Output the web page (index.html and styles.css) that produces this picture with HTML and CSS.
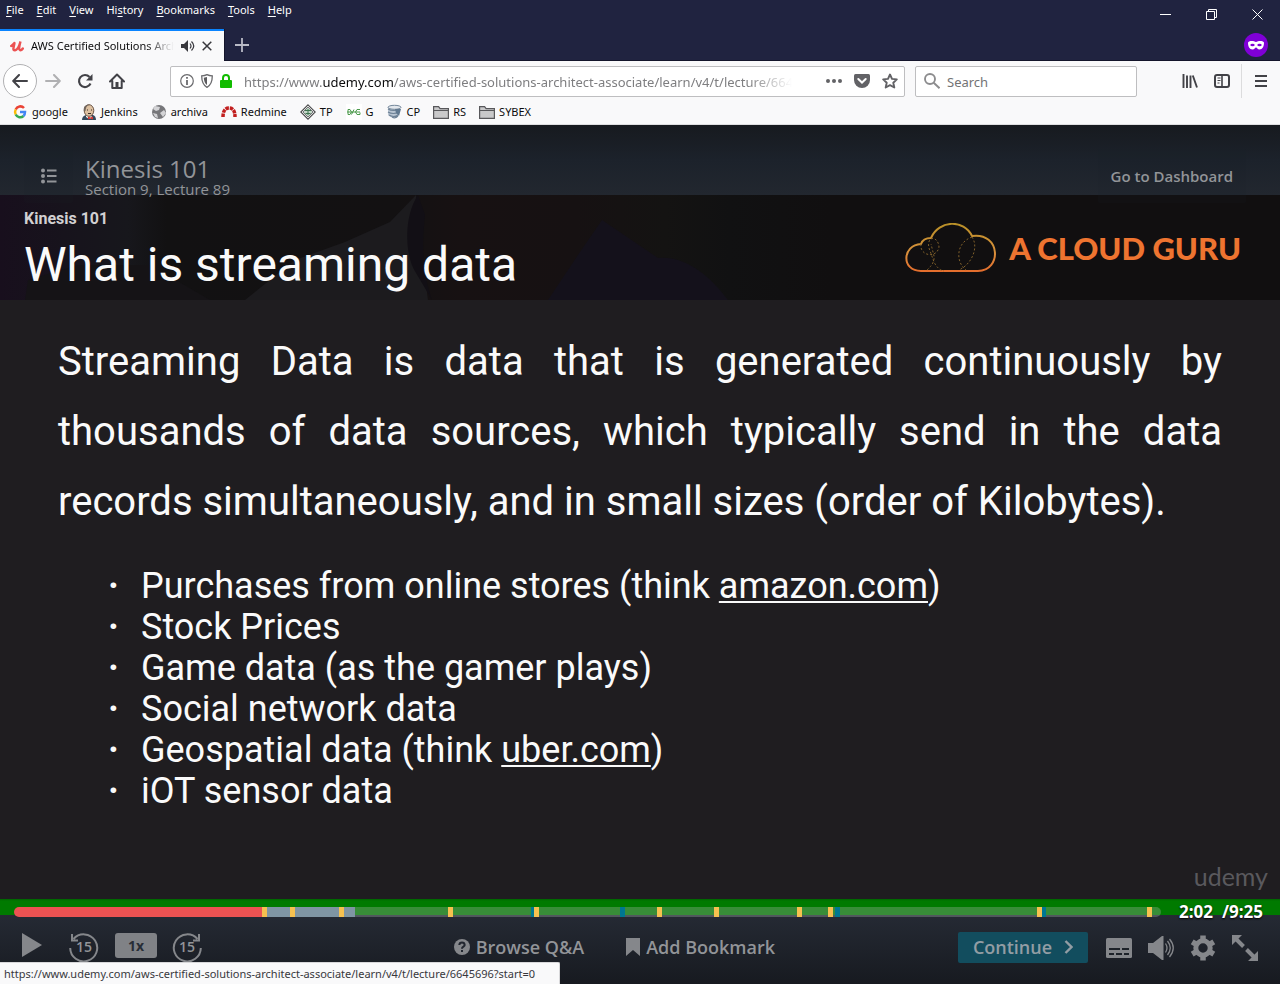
FILE: index.html
```
<!DOCTYPE html>
<html lang="en">
<head>
<meta charset="utf-8">
<title>AWS Certified Solutions Architect</title>
<link rel="stylesheet" href="styles.css">
</head>
<body>
<header class="titlebar">
  <div class="menu-row">
    <nav class="menus">
      <button><u>F</u>ile</button><button><u>E</u>dit</button><button><u>V</u>iew</button><button>Hi<u>s</u>tory</button><button><u>B</u>ookmarks</button><button><u>T</u>ools</button><button><u>H</u>elp</button>
    </nav>
    <div class="window-buttons">
      <button aria-label="Minimize"><svg width="11" height="11" viewBox="0 0 11 11"><path d="M0 5.5h11" stroke="#fff"/></svg></button>
      <button aria-label="Restore"><svg width="11" height="11" viewBox="0 0 11 11" fill="none" stroke="#fff"><path d="M.5 2.5h8v8h-8zM2.500 2.500v-2h8v8h-2"/></svg></button>
      <button aria-label="Close window"><svg width="11" height="11" viewBox="0 0 11 11"><path d="M.5.5l10 10M10.500.5l-10 10" stroke="#fff"/></svg></button>
    </div>
  </div>
  <div class="tab-row">
    <div class="tab">
      <svg width="14" height="12" viewBox="0 0 14 12" fill="none" stroke="#ec5252" stroke-width="2.400" stroke-linecap="round"><path d="M1.200 6C4 4.500 5 1 4.200 4.500S2.500 10.500 5 10.300C8 10 9.500 5 10.500 1.500 9 7 8.500 10 10.200 10.300 11.500 10.300 12.300 9.300 12.800 8.500"/></svg>
      <span class="tab-title">AWS Certified Solutions Architect</span>
      <button aria-label="Mute tab"><svg width="14" height="12" viewBox="0 0 14 12"><path d="M0 4h3l4-4v12L3 8H0z" fill="#38383d"/><path d="M9 3.500q2 2.500 0 5M10.500 1.500q4.500 4.500 0 9" fill="none" stroke="#38383d" stroke-width="1.200"/></svg></button>
      <button aria-label="Close tab"><svg width="10" height="10" viewBox="0 0 10 10"><path d="M.7.7l8.600 8.600M9.300.7L.7 9.300" stroke="#38383d" stroke-width="1.500"/></svg></button>
    </div>
    <button class="new-tab" aria-label="New tab"><svg width="14" height="14" viewBox="0 0 14 14"><path d="M7 0v14M0 7h14" stroke="#b9bac6" stroke-width="1.800"/></svg></button>
    <svg class="private" width="24" height="24" viewBox="0 0 24 24"><circle cx="12" cy="12" r="12" fill="#8000d7"/><path d="M4 9.500C6 7 10 8 12 9c2-1 6-2 8 .5 0 4-1.500 7-4.500 7-2 0-2.500-2-3.500-2s-1.500 2-3.500 2C5.500 16.500 4 13.500 4 9.500z" fill="#fff"/><ellipse cx="8.500" cy="12" rx="2.200" ry="1.300" fill="#8000d7"/><ellipse cx="15.500" cy="12" rx="2.200" ry="1.300" fill="#8000d7"/></svg>
  </div>
</header>

<div class="toolbar">
  <button class="back" aria-label="Back"><svg width="16" height="14" viewBox="0 0 16 14" fill="none" stroke="#424247" stroke-width="2" stroke-linecap="round" stroke-linejoin="round"><path d="M15 7H1.500M7 1L1.200 7 7 13"/></svg></button>
  <div class="nav-buttons">
    <button aria-label="Forward"><svg width="16" height="14" viewBox="0 0 16 14" fill="none" stroke="#b0b0b2" stroke-width="2" stroke-linecap="round" stroke-linejoin="round"><path d="M1 7h13.500M9 1l5.800 6L9 13"/></svg></button>
    <button aria-label="Reload"><svg width="16" height="16" viewBox="0 0 16 16" fill="none" stroke="#424247" stroke-width="2.200"><path d="M13.500 10.500A6 6 0 1 1 12.500 4"/><path d="M15.500 1v6.500H9z" fill="#424247" stroke="none"/></svg></button>
    <button aria-label="Home"><svg width="16" height="16" viewBox="0 0 16 16"><path d="M1 8.500L8 1.500l7 7M3.300 8v7h9.400V8" fill="none" stroke="#424247" stroke-width="2" stroke-linecap="round" stroke-linejoin="round"/><path d="M6.500 9h3v6h-3z" fill="#424247"/></svg></button>
  </div>
  <div class="address">
    <svg width="14" height="14" viewBox="0 0 14 14"><circle cx="7" cy="7" r="6.300" fill="none" stroke="#6b6b6e" stroke-width="1.200"/><path d="M7 6v5M7 3v1.800" stroke="#6b6b6e" stroke-width="1.800"/></svg>
    <svg width="12" height="14" viewBox="0 0 12 14"><path d="M6 .7c2 1 3.500 1.100 5.300 1.100C11.300 8 9.500 11.500 6 13.300 2.500 11.500.7 8 .7 1.800 2.500 1.800 4 1.700 6 .7z" fill="none" stroke="#6b6b6e" stroke-width="1.300"/><path d="M6 3v8C3.800 9.500 3 7 2.800 3.700z" fill="#5b5b5e"/></svg>
    <svg width="12" height="14" viewBox="0 0 12 14"><path d="M3 7V4a3 3 0 0 1 6 0v3" fill="none" stroke="#12bc00" stroke-width="2"/><rect y="6" width="12" height="8" rx="1" fill="#12bc00"/></svg>
    <span class="url">https://www.<b>udemy.com</b>/aws-certified-solutions-architect-associate/learn/v4/t/lecture/6645696</span>
    <button aria-label="Page actions"><svg width="16" height="4" viewBox="0 0 16 4" fill="#626266"><circle cx="2" cy="2" r="2"/><circle cx="8" cy="2" r="2"/><circle cx="14" cy="2" r="2"/></svg></button>
    <button aria-label="Save to Pocket"><svg width="16" height="14" viewBox="0 0 16 14"><path d="M1.500 0h13Q16 0 16 1.500V6a8 8 0 0 1-16 0V1.500Q0 0 1.500 0z" fill="#626266"/><path d="M4.300 5L8 8.500 11.700 5" fill="none" stroke="#fff" stroke-width="2" stroke-linecap="round"/></svg></button>
    <button aria-label="Bookmark page"><svg width="16" height="16" viewBox="0 0 16 16"><path d="M8 1.500l2 4.400 4.800.5-3.500 3.300 1 4.800L8 12.200l-4.300 2.300 1-4.800L1.200 6.400 6 5.900z" fill="none" stroke="#626266" stroke-width="1.900" stroke-linejoin="round"/></svg></button>
  </div>
  <label class="search"><svg width="16" height="16" viewBox="0 0 16 16" fill="none" stroke="#8c8c8e" stroke-width="1.900"><circle cx="6" cy="6" r="5"/><path d="M9.700 9.700l5.800 5.500"/></svg><input type="text" placeholder="Search" aria-label="Search"></label>
  <div class="tools">
    <button aria-label="Library"><svg width="16" height="14" viewBox="0 0 16 14" stroke="#424247" stroke-width="1.900"><path d="M1.500 0v14M5 1.500V14M8.500 1.500V14M10.800 1.500L15 13.500"/></svg></button>
    <button aria-label="Sidebars"><svg width="16" height="14" viewBox="0 0 16 14" fill="none" stroke="#424247"><rect x="1" y="1" width="14" height="12" rx="2" stroke-width="2"/><path d="M8 1v12" stroke-width="1.600"/><path d="M3.500 4h3M3.500 6.500h3M3.500 9h2"/></svg></button>
  </div>
  <button class="app-menu" aria-label="Open menu"><svg width="12" height="12" viewBox="0 0 12 12" stroke="#424247" stroke-width="2"><path d="M0 1h12M0 6h12M0 11h12"/></svg></button>
</div>

<nav class="bookmarks">
  <a href="#"><svg width="16" height="16" viewBox="0 0 16 16" fill="none" stroke-width="2.500"><path d="M12 4A5 5 0 0 0 3.700 5.500" stroke="#ea4335"/><path d="M3.700 5.500a5.200 5.200 0 0 0 0 5" stroke="#fbbc05"/><path d="M3.700 10.500A5 5 0 0 0 11.500 12" stroke="#34a853"/><path d="M8 8h5c0 2-.5 3-1.500 4" stroke="#4285f4"/></svg>google</a>
  <a href="#"><svg width="16" height="16" viewBox="0 0 16 16"><path d="M1 16q0-4 4-5l7 0q3 1 3 5z" fill="#34495c"/><path d="M5 10h5l1 4-3 1-3-2z" fill="#f2eee8"/><ellipse cx="8" cy="6.500" rx="4.800" ry="5.800" fill="#dcc0a0" stroke="#67503f"/><path d="M3 7C2 2 5 0 9 1 6 1 5 3 4.500 7z" fill="#71655c"/><path d="M6 6h1M10 6h1M7 9.500h3" stroke="#3a2c27"/><path d="M7 12.500l2.500 1 2.500-1v3l-2.500-1-2.500 1z" fill="#d33833"/></svg>Jenkins</a>
  <a href="#"><svg width="16" height="16" viewBox="0 0 16 16"><circle cx="8" cy="8" r="7" fill="#77777a"/><path d="M4 2l5 1-1 3-3 1-3-2zM9 9l4-3 2 3-3 4zM2 9l4 1 1 4-3-1z" fill="#d4d4d6"/></svg>archiva</a>
  <a href="#"><svg width="16" height="16" viewBox="0 0 16 16" fill="none" stroke="#c21f1f" stroke-width="3.500" stroke-dasharray="3.500 .8"><path d="M2 13C2 7 4 4 8 4s6 3 6 9"/></svg>Redmine</a>
  <a href="#"><svg width="16" height="16" viewBox="0 0 16 16" fill="none"><path d="M8 .8L15.200 8 8 15.200.8 8z" fill="#fff" stroke="#48484a" stroke-width="1.100"/><path d="M8 3L13 8l-5 5-5-5z" fill="#c5d8c9" stroke="#59595b" stroke-width=".8"/><path d="M5 6.500h6M8 5v6M5.500 9.500h5" stroke="#3f7450"/></svg>TP</a>
  <a href="#"><svg width="16" height="16" viewBox="0 0 16 16" fill="none" stroke="#4c9a4c"><path fill="#fff" stroke="none" d="M0 0h16v16H0z"/><path d="M1 8h13M2 5.500h2q3 2.500 0 5H2zM8 5.500L5.500 10.500M14 5.500h-3q-3 2.500 0 5h3v-2"/></svg>G</a>
  <a href="#"><svg width="16" height="16" viewBox="0 0 16 16"><path d="M1 3v8q5 5 10 0V3z" fill="#b9c5d2"/><path d="M1 5q5 3 12 0M1 8q5 3 11 0M2 11q5 3 9 0M5 13q3 2 6-1" fill="none" stroke="#6e8296" stroke-width="1.200"/><ellipse cx="7.500" cy="3.300" rx="6.500" ry="2" fill="#e2e7ec" stroke="#75889b"/><path d="M8 5h6l-2 7-3-3z" fill="#617990"/></svg>CP</a>
  <a href="#"><svg width="16" height="16" viewBox="0 0 16 16"><path d="M.6 2.600h5l1.500 2h8.300v9.800H.6z" fill="#c9c9ca" stroke="#58585b" stroke-width="1.200"/><path d="M1 6.500h14" stroke="#58585b"/></svg>RS</a>
  <a href="#"><svg width="16" height="16" viewBox="0 0 16 16"><path d="M.6 2.600h5l1.500 2h8.300v9.800H.6z" fill="#c9c9ca" stroke="#58585b" stroke-width="1.200"/><path d="M1 6.500h14" stroke="#58585b"/></svg>SYBEX</a>
</nav>

<main class="player">
  <div class="lecture-bar">
    <button class="outline" aria-label="Course content"><svg width="16" height="16" viewBox="0 0 16 16"><g fill="#929498"><circle cx="2" cy="2.500" r="2"/><circle cx="2" cy="8" r="2"/><circle cx="2" cy="13.500" r="2"/></g><path d="M6 2.500h9.500M6 8h9.500M6 13.500h9.500" stroke="#929498" stroke-width="2"/></svg></button>
    <div class="lecture">
      <h1>Kinesis 101</h1>
      <p>Section 9, Lecture 89</p>
    </div>
    <a class="dashboard" href="#">Go to Dashboard</a>
  </div>

  <section class="slide">
    <div class="slide-head">
      <svg class="backdrop" viewBox="0 0 1280 105" preserveAspectRatio="none"><defs><linearGradient id="bg"><stop offset="0" stop-color="#180f1d"/><stop offset=".05" stop-color="#17131c"/><stop offset=".1" stop-color="#17171c"/><stop offset=".13" stop-color="#121112"/><stop offset=".31" stop-color="#131112"/><stop offset=".36" stop-color="#171112"/><stop offset=".45" stop-color="#161112"/><stop offset=".52" stop-color="#141312"/><stop offset=".57" stop-color="#111112"/><stop offset=".65" stop-color="#110f10"/></linearGradient></defs><path d="M0 0h1280v105H0z" fill="url(#bg)"/><path d="M28 85l50-15 72 0 60 35H25z" fill="#151316"/><path d="M245 105l50-40 50-18 45-20 26-27 2 30 10 75z" fill="#1c1b1e"/><path d="M418 0c-14 20-14 60-2 78l16 27c-12-35-9-65-7-85z" fill="#120f15"/><path d="M602 25l-24 35-30 45h180c-15-20-40-45-70-42z" fill="#14111b"/></svg>
      <div class="slide-titles">
        <p>Kinesis 101</p>
        <h2>What is streaming data</h2>
      </div>
      <div class="brand">
        <svg width="92" height="50" viewBox="0 0 92 50" fill="none"><defs><linearGradient id="cloud" x2="0" y2="1"><stop stop-color="#b99028"/><stop offset=".6" stop-color="#d9903c"/><stop offset="1" stop-color="#e46e2d"/></linearGradient></defs><path d="M16 48C-4 48-3 22 16 21q2-6 10-6C34-3 59-4 67 13c29-4 30 35 6 35z" stroke="url(#cloud)" stroke-width="2"/><path d="M16 21c-2 12 16 15 18 3-1-12-13-11-10 1l5 14q4 8 10 9M22 47q8-7 7-14l-3-12M67 14c-17 6-16 26-6 33M67 14c7 10 0 27-13 33" stroke="#80602a" stroke-dasharray="2 2"/></svg>
        <span>A CLOUD GURU</span>
      </div>
    </div>
    <div class="slide-body">
      <p>Streaming Data is data that is generated continuously by thousands of data sources, which typically send in the data records simultaneously, and in small sizes (order of Kilobytes).</p>
      <ul>
        <li>Purchases from online stores (think <a href="#">amazon.com</a>)</li>
        <li>Stock Prices</li>
        <li>Game data (as the gamer plays)</li>
        <li>Social network data</li>
        <li>Geospatial data (think <a href="#">uber.com</a>)</li>
        <li>iOT sensor data</li>
      </ul>
    </div>
    <div class="watermark">udemy</div>
  </section>

  <footer class="controls">
    <div class="timeline">
      <div class="track">
        <input type="range" min="0" max="565" value="122" aria-label="Seek">
        <i class="mark note" style="left:45.100%"></i><i class="mark note" style="left:52.800%"></i><i class="mark note" style="left:71.600%"></i><i class="mark note" style="left:89.500%"></i>
        <i class="mark" style="left:21.600%"></i><i class="mark" style="left:24.100%"></i><i class="mark" style="left:28.300%"></i><i class="mark" style="left:37.800%"></i><i class="mark" style="left:45.300%"></i><i class="mark" style="left:56.100%"></i><i class="mark" style="left:61%"></i><i class="mark" style="left:68.300%"></i><i class="mark" style="left:71%"></i><i class="mark" style="left:89.200%"></i><i class="mark" style="left:98.800%"></i>
      </div>
      <div class="time"><span>2:02</span><span>/9:25</span></div>
    </div>
    <div class="buttons">
      <div class="group playback">
        <button aria-label="Play"><svg width="22" height="24" viewBox="0 0 22 24"><path d="M1 0l20 12L1 24z" fill="#85878b"/></svg></button>
        <button class="skip" aria-label="Back 15 seconds"><svg width="30" height="30" viewBox="0 0 30 30" fill="none" stroke="#85878b" stroke-width="2"><path d="M4.500 6A13.500 13.500 0 1 1 1.200 15M3 1v6.500h6"/></svg><span>15</span></button>
        <button class="rate">1x</button>
        <button class="skip" aria-label="Forward 15 seconds"><svg width="30" height="30" viewBox="0 0 30 30" fill="none" stroke="#85878b" stroke-width="2"><path d="M25.500 6A13.500 13.500 0 1 0 28.800 15M27 1v6.500h-6"/></svg><span>15</span></button>
      </div>
      <div class="group actions">
        <button><svg width="16" height="16" viewBox="0 0 16 16"><circle cx="8" cy="8" r="8" fill="#85878b"/><path d="M5.300 6Q5.500 3.500 8 3.500T10.700 6C10.700 7.800 8 7.500 8 9.700M8 11v2" fill="none" stroke="#21262f" stroke-width="2"/></svg>Browse Q&amp;A</button>
        <button><svg width="14" height="18" viewBox="0 0 14 18"><path d="M0 0h14v18l-7-6-7 6z" fill="#85878b"/></svg>Add Bookmark</button>
      </div>
      <div class="group options">
        <button class="continue">Continue <svg width="9" height="14" viewBox="0 0 9 14"><path d="M1.500 1l6 6-6 6" fill="none" stroke="#929da4" stroke-width="2.400"/></svg></button>
        <button aria-label="Captions"><svg width="26" height="20" viewBox="0 0 26 20"><rect width="26" height="20" rx="1.500" fill="#85878b"/><path d="M3 11h11M16 11h7M3 16h5M10 16h6M18 16h5" stroke="#1d2229" stroke-width="2"/></svg></button>
        <button aria-label="Volume"><svg width="26" height="24" viewBox="0 0 26 24"><path d="M0 7h5l9-7h1.500v24H14l-9-7H0z" fill="#85878b"/><path d="M17.500 7.500q3 4.500 0 9M19.500 5q5.500 7 0 14M21.500 3q7.500 9 0 18" fill="none" stroke="#85878b" stroke-width="1.300"/></svg></button>
        <button aria-label="Settings"><svg width="26" height="26" viewBox="0 0 26 26"><circle cx="13" cy="13" r="7.200" fill="none" stroke="#85878b" stroke-width="5"/><path d="M13 .5v6M13 19.500v6M2.200 6.800l5 3M18.800 16.200l5 3M2.200 19.200l5-3M18.800 9.800l5-3" stroke="#85878b" stroke-width="5.500"/></svg></button>
        <button class="expand" aria-label="Full screen"><svg width="26" height="26" viewBox="0 0 26 26"><path d="M0 0h10L0 10zM26 26H16l10-10z" fill="#85878b"/><path d="M3 3l8.500 8.500M14.500 14.500L23 23" stroke="#85878b" stroke-width="4"/></svg></button>
      </div>
    </div>
  </footer>
</main>
<div class="status">https://www.udemy.com/aws-certified-solutions-architect-associate/learn/v4/t/lecture/6645696?start=0</div>
</body>
</html>
```
FILE: styles.css
```
* { box-sizing: border-box; }
body { margin: 0; min-height: 100vh; display: flex; flex-direction: column; background: #1f1d20; color: #0c0c0d; font: 11px/16px "Noto Sans", "Open Sans", sans-serif; }
button { padding: 0; border: 0; background: none; color: inherit; font: inherit; display: flex; align-items: center; justify-content: center; }
svg { display: block; flex: none; }
h1, h2, p, ul { margin: 0; padding: 0; font-weight: 400; }
a { color: inherit; text-decoration: none; }

.titlebar { background: #202340; color: #fff; }
.menu-row { display: flex; justify-content: space-between; height: 29px; }
.menus { display: flex; align-items: flex-start; gap: 13px; padding: 2px 6px; }
.menus button { display: block; }
.menus u { text-underline-offset: 2px; }
.window-buttons { display: flex; }
.window-buttons button { width: 46px; height: 28px; }
.tab-row { display: flex; height: 32px; border-bottom: 1px solid #14152b; }
.tab { display: flex; align-items: center; gap: 7px; width: 224px; height: 32px; padding: 0 12px 0 10px; border-top: 2px solid #0a84ff; background: #f9f9fa; color: #0c0c0d; }
.tab-title { flex: 1; overflow: hidden; white-space: nowrap; -webkit-mask-image: linear-gradient(to right, #000 80%, transparent); mask-image: linear-gradient(to right, #000 80%, transparent); }
.new-tab { width: 34px; border-left: 1px solid #14152b; }
.private { margin: 4px 12px 0 auto; }

.toolbar { display: flex; align-items: center; height: 40px; padding-left: 3px; background: #f9f9fa; }
.back { width: 34px; height: 34px; border: 1px solid #b1b1b3; border-radius: 50%; background: #fff; }
.nav-buttons { display: flex; gap: 16px; padding-left: 8px; }
.address, .search { display: flex; align-items: center; height: 31px; border: 1px solid #bebec0; border-radius: 2px; background: #fff; }
.address { flex: 1; min-width: 0; gap: 7px; margin-left: 45px; padding: 0 6px 0 9px; }
.url { flex: 1; min-width: 0; margin: 2px 22px 0 5px; overflow: hidden; white-space: nowrap; color: #7e7e80; font-size: 13px; -webkit-mask-image: linear-gradient(to right, #000 92%, transparent); mask-image: linear-gradient(to right, #000 92%, transparent); }
.url b { font-weight: 400; color: #0c0c0d; }
.address button { margin-left: 5px; }
.search { width: 222px; margin-left: 10px; gap: 7px; padding: 0 8px; }
.search input { flex: 1; min-width: 0; border: 0; outline: 0; padding: 2px 0 0; background: none; font: 13px/16px "Noto Sans", "Open Sans", sans-serif; }
.search input::placeholder { color: #737375; opacity: 1; }
.tools { display: flex; gap: 16px; margin-left: 45px; padding-right: 11px; }
.app-menu { width: 39px; height: 34px; border-left: 1px solid #dcdcdd; }

.bookmarks { display: flex; gap: 13px; height: 24px; padding: 3px 12px 0; background: #f9f9fa; border-bottom: 1px solid #dedee0; }
.bookmarks a { display: flex; gap: 4px; height: 16px; white-space: nowrap; }

.player { flex: 1; display: flex; flex-direction: column; font-family: "Open Sans", sans-serif; }
.lecture-bar { position: relative; z-index: 1; display: flex; align-items: flex-start; height: 70px; padding: 24px 34px 0 24px; background: linear-gradient(#171a1f, #1c222b 50%, #22272f); color: #929498; }
.outline { width: 49px; height: 54px; border-radius: 2px; background: rgba(30, 34, 42, .15); }
.lecture { flex: 1; margin: 7px 0 0 12px; }
.lecture h1 { font-size: 24px; line-height: 26px; }
.lecture p { font-size: 15px; line-height: 14px; }
.dashboard { padding: 17px 13px; border-radius: 2px; background: rgba(30, 34, 42, .15); font-size: 15px; line-height: 20px; font-weight: 600; }

.slide { flex: 1; display: flex; flex-direction: column; color: #fafafa; font-family: Roboto, sans-serif; }
.slide-head { position: relative; display: flex; justify-content: space-between; height: 105px; padding: 14px 39px 0 24px; background: #110f10; }
.backdrop { position: absolute; inset: 0; width: 100%; height: 100%; }
.slide-titles, .brand { position: relative; }
.slide-titles p { color: #d2d0d2; font-size: 16px; line-height: 20px; font-weight: 700; }
.slide-titles h2 { font-size: 48px; line-height: 72px; }
.brand { display: flex; align-items: center; gap: 12px; height: 78px; color: #ee7430; font: 900 31px/40px Lato, sans-serif; }
.slide-body { padding: 27px 58px 0; }
.slide-body p { font-size: 40px; line-height: 70px; text-align: justify; }
.slide-body ul { margin-top: 29px; padding-left: 50px; list-style: none; font-size: 36px; line-height: 41px; }
.slide-body li { display: block; }
.slide-body li::before { content: "·"; display: inline-block; width: 33px; font-weight: 700; }
.slide-body a { text-decoration: underline; text-decoration-thickness: 2px; text-underline-offset: 3px; }
.watermark { margin: auto 12px 7px auto; color: #5a595d; font: 25px/32px Lato, sans-serif; }

.controls { height: 85px; background: linear-gradient(#006500 0, #007a00 2px, #007a00 16px, transparent 16px), linear-gradient(#252a34 16px, #171a20); color: #929498; }
.timeline { display: flex; align-items: center; height: 26px; padding: 0 17px 0 14px; }
.track { position: relative; flex: 1; height: 10px; }
.track input { display: block; width: 100%; height: 10px; margin: 0; border-radius: 5px; appearance: none; background: linear-gradient(to right, #ec5252 21.700%, #7f95a3 21.700%, #7f95a3 29.700%, transparent 29.700%), linear-gradient(#388d38 8px, #51585d 8px); }
.track input::-webkit-slider-thumb { appearance: none; width: 1px; height: 1px; }
.mark { position: absolute; top: 0; width: 5px; height: 10px; background: #f6c150; }
.note { background: #007791; }
.time { display: flex; gap: 9px; margin-left: 18px; color: #fff; font-size: 17px; line-height: 20px; font-weight: 700; text-shadow: 0 1px 2px #000; }
.buttons { display: grid; grid-template-columns: 1fr auto auto; padding: 0 22px 0 21px; }
.group { display: flex; align-items: center; height: 44px; }
.playback { align-items: flex-start; padding-top: 8px; }
.playback > button:first-child { margin-right: 26px; }
.skip { position: relative; height: 30px; }
.skip span { position: absolute; inset: 0; font-size: 14px; line-height: 28px; font-weight: 600; }
.rate { width: 42px; height: 25px; margin: 0 15px 0 16px; border-radius: 3px; background: #808286; color: #282d36; font-size: 14px; font-weight: 700; }
.actions { gap: 42px; font-size: 18px; line-height: 24px; font-weight: 600; }
.actions button { gap: 6px; }
.options { justify-content: flex-end; gap: 16px; padding: 2px 0 0 183px; }
.continue { width: 130px; height: 31px; gap: 12px; margin: 0 2px 2px 0; border-radius: 2px; background: #124d5e; color: #929da4; font-size: 18px; font-weight: 600; }
.status { position: absolute; left: 0; bottom: 0; min-width: 560px; height: 22px; padding: 3px 4px; border: 1px solid #d8d8da; border-width: 1px 1px 0 0; border-radius: 0 2px 0 0; background: #f9f9fa; color: #38383d; line-height: 16px; white-space: nowrap; }
```
